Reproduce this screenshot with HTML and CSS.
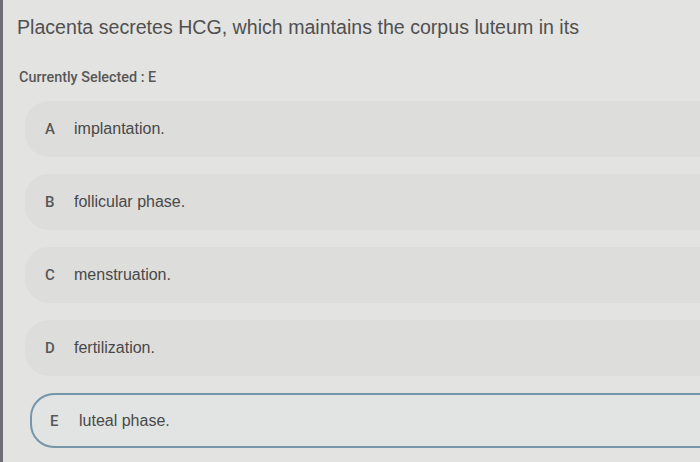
FILE: index.html
```html
<!DOCTYPE html>
<html>
<head>
<meta charset="utf-8">
<link rel="stylesheet" href="styles.css">
</head>
<body>
<div class="page">
  <h1 class="question">Placenta secretes HCG, which maintains the corpus luteum in its</h1>
  <div class="selected">Currently Selected : E</div>
  <ul class="options">
    <li class="option"><span class="letter">A</span><span class="text">implantation.</span></li>
    <li class="option"><span class="letter">B</span><span class="text">follicular phase.</span></li>
    <li class="option"><span class="letter">C</span><span class="text">menstruation.</span></li>
    <li class="option"><span class="letter">D</span><span class="text">fertilization.</span></li>
    <li class="option option-selected"><span class="letter">E</span><span class="text">luteal phase.</span></li>
  </ul>
</div>
</body>
</html>
```
FILE: styles.css
```css
html, body {
  margin: 0;
  padding: 0;
  height: 100%;
  overflow: hidden;
}
body {
  background: #e3e3e2;
  border-left: 3px solid #6e6e74;
  box-sizing: border-box;
}
.page {
  padding: 15px 0 0 14px;
}
.question {
  margin: 0;
  font-family: "Liberation Sans", Arial, sans-serif;
  font-weight: normal;
  font-size: 19.6px;
  line-height: 24px;
  color: #505050;
}
.selected {
  margin-top: 30px;
  font-family: Roboto, "Liberation Sans", sans-serif;
  font-weight: 500;
  font-size: 14.4px;
  line-height: 18px;
  color: #585858;
  padding-left: 2px;
}
.options {
  list-style: none;
  margin: 14px 0 0 8px;
  padding: 0;
  display: flex;
  flex-direction: column;
  gap: 17px;
}
.option {
  height: 56px;
  display: flex;
  align-items: center;
  gap: 17px;
  padding-left: 20px;
  border-radius: 24px 0 0 24px;
  background: #dddddc;
  box-sizing: border-box;
}
.letter {
  font-family: Roboto, "Liberation Sans", sans-serif;
  font-weight: 500;
  font-size: 15px;
  color: #575757;
  width: 12px;
}
.text {
  font-family: "Liberation Sans", Arial, sans-serif;
  font-size: 16px;
  color: #494949;
}
.option-selected {
  background: #e2e4e3;
  border: 2px solid #7595a8;
  border-right: none;
  margin-left: 5px;
  padding-left: 18px;
  height: 55px;
}
```
